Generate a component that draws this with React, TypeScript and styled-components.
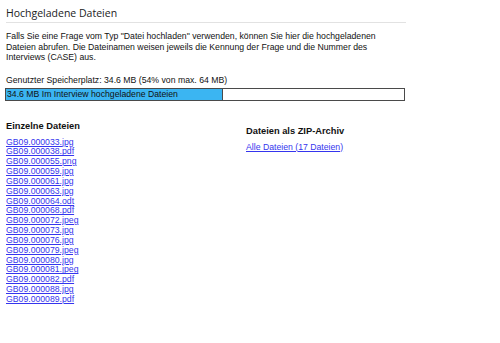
import React from 'react';
import styled, { createGlobalStyle } from 'styled-components';

const files = [
  'GB09.000033.jpg',
  'GB09.000038.pdf',
  'GB09.000055.png',
  'GB09.000059.jpg',
  'GB09.000061.jpg',
  'GB09.000063.jpg',
  'GB09.000064.odt',
  'GB09.000068.pdf',
  'GB09.000072.jpeg',
  'GB09.000073.jpg',
  'GB09.000076.jpg',
  'GB09.000079.jpeg',
  'GB09.000080.jpg',
  'GB09.000081.jpeg',
  'GB09.000082.pdf',
  'GB09.000088.jpg',
  'GB09.000089.pdf',
];

export default function App() {
  const used = 54.6;
  return (
    <>
      <GlobalStyle />
      <Page>
        <Title>Hochgeladene Dateien</Title>
        <Intro>
          Falls Sie eine Frage vom Typ "Datei hochladen" verwenden, können Sie hier die hochgeladenen
          Dateien abrufen. Die Dateinamen weisen jeweils die Kennung der Frage und die Nummer des
          Interviews (CASE) aus.
        </Intro>
        <Usage>Genutzter Speicherplatz: 34.6 MB (54% von max. 64 MB)</Usage>
        <Bar>
          <BarFill style={{ width: `${used}%` }}>34.6 MB Im Interview hochgeladene Dateien</BarFill>
        </Bar>
        <Columns>
          <Column>
            <ColumnTitle>Einzelne Dateien</ColumnTitle>
            <FileList>
              {files.map((f) => (
                <li key={f}>
                  <FileLink href="#">{f}</FileLink>
                </li>
              ))}
            </FileList>
          </Column>
          <Column $offset>
            <ColumnTitle>Dateien als ZIP-Archiv</ColumnTitle>
            <FileList>
              <li>
                <FileLink href="#">Alle Dateien (17 Dateien)</FileLink>
              </li>
            </FileList>
          </Column>
        </Columns>
      </Page>
    </>
  );
}

const GlobalStyle = createGlobalStyle`
  body {
    margin: 0;
    background: #fff;
    font-family: 'Liberation Sans', Arial, sans-serif;
    color: #111;
  }
`;

const Page = styled.div`
  width: 400px;
  padding: 5px 0 0 5px;
`;

const Title = styled.h1`
  margin: 0 -1px 0 1px;
  padding: 1px 0 2px;
  border-bottom: 1px solid #e2e2e2;
  font-family: 'Open Sans', 'DejaVu Sans', sans-serif;
  font-size: 10.5px;
  font-weight: 400;
  line-height: 14px;
  color: #222;
`;

const Intro = styled.p`
  margin: 8px 0 0 1px;
  font-size: 8.7px;
  line-height: 10.5px;
`;

const Usage = styled.p`
  margin: 12px 0 0 1px;
  font-size: 8.7px;
  line-height: 11px;
`;

const Bar = styled.div`
  margin-top: 2px;
  height: 11px;
  border: 1px solid #4a4a4a;
  background: #fff;
`;

const BarFill = styled.div`
  height: 100%;
  background: #3bb5f2;
  border-right: 1px solid #4a4a4a;
  box-sizing: border-box;
  font-size: 8.7px;
  line-height: 11px;
  padding-left: 1px;
  white-space: nowrap;
  color: #111;
`;

const Columns = styled.div`
  display: flex;
  margin-top: 19px;
`;

const Column = styled.div<{ $offset?: boolean }>`
  flex: 0 0 239px;
  padding-left: 1px;
  padding-top: ${(p) => (p.$offset ? '5px' : '0')};
`;

const ColumnTitle = styled.h2`
  margin: 0 0 6px;
  font-size: 9.3px;
  font-weight: 700;
  line-height: 12px;
`;

const FileList = styled.ul`
  list-style: none;
  margin: 0;
  padding: 0;
  font-size: 8.7px;
  line-height: 9.85px;
`;

const FileLink = styled.a`
  color: #3535ee;
  text-decoration: underline;
`;
